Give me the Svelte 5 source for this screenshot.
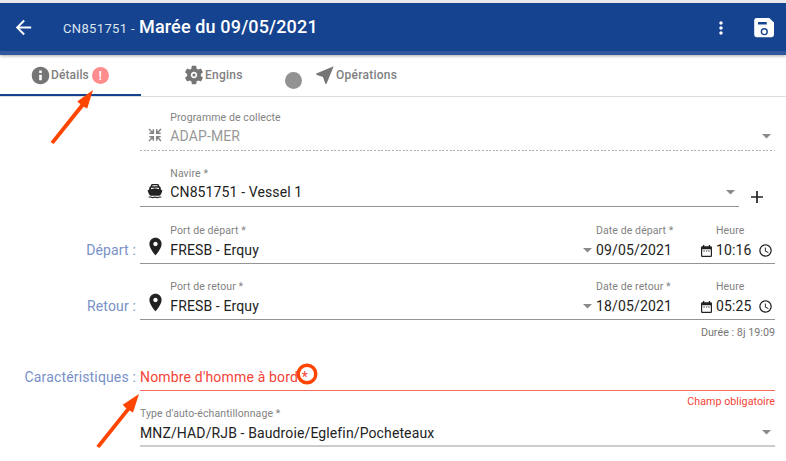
<script>
  const paths = {
    back: 'M20 11H7.83l5.59-5.59L12 4l-8 8 8 8 1.41-1.41L7.83 13H20v-2z',
    more: 'M12 8c1.1 0 2-.9 2-2s-.9-2-2-2-2 .9-2 2 .9 2 2 2zm0 2c-1.1 0-2 .9-2 2s.9 2 2 2 2-.9 2-2-.9-2-2-2zm0 6c-1.1 0-2 .9-2 2s.9 2 2 2 2-.9 2-2-.9-2-2-2z',
    info: 'M12 2C6.48 2 2 6.48 2 12s4.48 10 10 10 10-4.48 10-10S17.52 2 12 2zm1.5 15.500h-3v-6.500h3v6.500zm0-8.300h-3V6.400h3V9.200z',
    gear: 'M19.43 12.98c.04-.32.07-.64.07-.98s-.03-.66-.07-.98l2.11-1.65c.19-.15.24-.42.12-.64l-2-3.46c-.12-.22-.39-.3-.61-.22l-2.49 1c-.52-.4-1.08-.73-1.69-.98l-.38-2.65C14.46 2.18 14.25 2 14 2h-4c-.25 0-.46.18-.49.42l-.38 2.65c-.61.25-1.17.59-1.69.98l-2.49-1c-.23-.09-.49 0-.61.22l-2 3.46c-.13.22-.07.49.12.64l2.11 1.65c-.04.32-.07.65-.07.98s.03.66.07.98l-2.11 1.65c-.19.15-.24.42-.12.64l2 3.46c.12.22.39.3.61.22l2.49-1c.52.4 1.08.73 1.69.98l.38 2.65c.03.24.24.42.49.42h4c.25 0 .46-.18.49-.42l.38-2.65c.61-.25 1.17-.59 1.69-.98l2.49 1c.23.09.49 0 .61-.22l2-3.46c.12-.22.07-.49-.12-.64l-2.11-1.65zM12 15.5c-1.93 0-3.5-1.57-3.5-3.5s1.57-3.5 3.5-3.5 3.5 1.57 3.5 3.5-1.57 3.5-3.5 3.5zm0-1.8a1.7 1.7 0 1 0 0-3.4 1.7 1.7 0 0 0 0 3.4z',
    nav: 'M21.500 2.500L2.500 10.300v1.400l7.300 2.500L12.300 21.500h1.400L21.500 2.500z',
    boat: 'M8 1.500h8q1.500 0 2 1.500l.5 2q1.800.4 2 2l.5 3.200 2.200 1.100L21 17q-.8 2-3 2H6q-2.200 0-3-2L.8 11.300 3 10.200 3.500 7q.2-1.600 2-2L6 3q.5-1.500 2-1.500zM8.400 3.300L8 5h8l-.4-1.700zM6.200 7.200l-.3 2L12 7.700l6.100 1.500-.3-2zM2.500 20.200h3q3 1.300 6.500 0 3.500 1.300 6.500 0h3v1.600h-2.700Q16 23.500 12 22q-4 1.500-6.800-.2H2.500z',
    pin: 'M12 2C8.13 2 5 5.13 5 9c0 5.25 7 13 7 13s7-7.75 7-13c0-3.87-3.13-7-7-7zm0 9.5c-1.38 0-2.5-1.12-2.5-2.5s1.12-2.5 2.5-2.5 2.5 1.12 2.5 2.5-1.12 2.5-2.5 2.5z',
    clock: 'M11.99 2C6.47 2 2 6.48 2 12s4.47 10 9.99 10C17.52 22 22 17.52 22 12S17.52 2 11.99 2zM12 20c-4.42 0-8-3.58-8-8s3.58-8 8-8 8 3.58 8 8-3.58 8-8 8zm.5-13H11v6l5.25 3.15.75-1.23-4.5-2.67z'
  };

  const trips = [
    { side: 'Départ :', port: 'Port de départ *', date: 'Date de départ *', day: '09/05/2021', time: '10:16' },
    { side: 'Retour :', port: 'Port de retour *', date: 'Date de retour *', day: '18/05/2021', time: '05:25' }
  ];
</script>

{#snippet icon(name, size)}
  <svg class="icon" width={size} height={size} viewBox="0 0 24 24"><path d={paths[name]} fill="currentColor" fill-rule="evenodd" /></svg>
{/snippet}

{#snippet caret()}
  <svg class="caret" width="9" height="5" viewBox="0 0 9 5"><path d="M0 0h9L4.500 4.500z" fill="currentColor" /></svg>
{/snippet}

<div class="page">
  <header>
    <span class="back">{@render icon('back', 23)}</span>
    <h1><small>CN851751 -</small><b>Marée du 09/05/2021</b></h1>
    <span class="more">{@render icon('more', 20)}</span>
    <svg class="save" width="20" height="20" viewBox="0 0 20 20">
      <path fill="#fff" fill-rule="evenodd" d="M2.6 0h12.6L20 4.6v12.2a2.4 2.4 0 0 1-2.4 2.4H2.6A2.4 2.4 0 0 1 .2 16.800V2.400A2.400 2.400 0 0 1 2.600 0zM4 3.900v2.600h8.700V3.900z" />
      <circle cx="10.300" cy="13.700" r="2.900" fill="none" stroke="#15438f" stroke-width="1.400" />
    </svg>
  </header>

  <nav>
    <div class="tab active">{@render icon('info', 21)}<span>Détails</span><i class="alert">!</i></div>
    <div class="tab gears">{@render icon('gear', 22)}<span>Engins</span></div>
    <i class="dot"></i>
    <div class="tab ops">{@render icon('nav', 22)}<span>Opérations</span></div>
  </nav>

  <main>
    <section class="row first">
      <aside></aside>
      <div class="field disabled">
        <div class="lead">
          <svg width="14" height="14" viewBox="0 0 14 14" fill="none" stroke="currentColor" stroke-width="1.500">
            <path d="M1 1l4.200 4.200M1.300 5.300h4V1.300M13 1L8.800 5.200M12.700 5.300h-4V1.300M1 13l4.200-4.200M1.300 8.700h4v4M13 13L8.800 8.800M12.700 8.700h-4v4" />
          </svg>
        </div>
        <div class="body"><label>Programme de collecte</label><p>ADAP-MER</p></div>
        {@render caret()}
      </div>
    </section>

    <section class="row second">
      <aside></aside>
      <div class="field">
        <div class="lead boat">{@render icon('boat', 16)}</div>
        <div class="body"><label>Navire *</label><p>CN851751 - Vessel 1</p></div>
        {@render caret()}
      </div>
      <svg class="plus" width="12" height="12" viewBox="0 0 12 12"><path d="M6 0v12M0 6h12" stroke="#222" stroke-width="1.700" /></svg>
    </section>

    {#each trips as trip, i}
      <section class="row" class:third={i === 0} class:fourth={i === 1}>
        <aside>{trip.side}</aside>
        <div class="field trip">
          <div class="lead pin">{@render icon('pin', 21)}</div>
          <div class="body"><label>{trip.port}</label><p>FRESB - Erquy</p></div>
          {@render caret()}
          <div class="date"><label>{trip.date}</label><p class="num">{trip.day}</p></div>
          <svg class="calendar" width="11" height="12" viewBox="0 0 11 12">
            <path fill="#222" fill-rule="evenodd" d="M2 0h1.300v1.200h4.400V0H9v1.200h.8a1.200 1.200 0 0 1 1.200 1.200v8.400a1.200 1.200 0 0 1-1.200 1.200H1.200A1.200 1.200 0 0 1 0 10.800V2.400a1.200 1.200 0 0 1 1.200-1.200H2zM1.200 4.200v6.600h8.600V4.200z" />
            <path fill="#222" d="M2.400 5.400h1.300v1.200H2.400zM4.900 5.400h1.300v1.200H4.900zM7.300 5.400h1.300v1.200H7.300z" />
          </svg>
          <div class="time"><label>Heure</label><p class="num">{trip.time}</p></div>
          <span class="clock">{@render icon('clock', 15)}</span>
        </div>
      </section>
    {/each}
    <div class="hint">Durée : 8j 19:09</div>

    <section class="row crew">
      <aside>Caractéristiques :</aside>
      <div class="field invalid"><p>Nombre d'homme à bord *</p></div>
    </section>
    <div class="hint error">Champ obligatoire</div>

    <section class="row last">
      <aside></aside>
      <div class="field">
        <div class="body"><label>Type d'auto-échantillonnage *</label><p>MNZ/HAD/RJB - Baudroie/Eglefin/Pocheteaux</p></div>
        {@render caret()}
      </div>
    </section>
  </main>

  <svg class="notes" width="786" height="461" viewBox="0 0 786 461">
    <g fill="#ff4500" stroke="none">
      <path d="M50.500 141.900L80.500 104.200L77.200 101.400L93 90L87.200 108.600L83.700 106.700L53.700 144z" />
      <path d="M96.300 446.100L126.300 408.400L122.700 404.800L139 394L133 412.500L129.500 410.600L99.500 448z" />
    </g>
    <circle cx="307" cy="374" r="8.800" fill="none" stroke="#ff4500" stroke-width="3.400" />
  </svg>
</div>

<style>
  :global(body) { margin: 0; background: #fff; }
  .page { position: relative; width: 786px; height: 461px; overflow: hidden; background: #fff; font-family: Roboto, sans-serif; color: #222; }
  header { display: flex; align-items: center; box-sizing: border-box; height: 55px; border-top: 3px solid #e9e9ed; border-bottom: 4px solid #30589c; background: #15438f; color: #fff; box-shadow: 0 1px 3px #0005; }
  .icon { display: block; flex: none; }
  .back { padding-left: 12px; }
  h1 { flex: 1; display: flex; align-items: baseline; margin: 2px 0 0 28px; white-space: nowrap; line-height: 24px; }
  small { width: 76px; font-size: 13px; font-weight: 400; color: #dbe3f0; letter-spacing: .35px; }
  h1 b { font-size: 18px; font-weight: 500; letter-spacing: .15px; }
  .more { margin: 1px 23px 0 0; }
  .save { margin: 1px 12px 0 0; }
  nav { display: flex; box-sizing: border-box; height: 42px; border-bottom: 1px solid #ddd; color: #808080; font-size: 12px; font-weight: 500; line-height: 40px; }
  .tab { display: flex; align-items: center; height: 41px; box-sizing: border-box; padding-top: 1px; }
  .tab .icon { color: #757575; }
  .active { width: 141px; padding-left: 30px; border-bottom: 2px solid #15438f; letter-spacing: .12px; }
  .alert { display: block; width: 17px; height: 17px; margin-left: 3px; border-radius: 50%; background: #ff8d8d; color: #fff; font: 500 13px/17px Roboto, sans-serif; text-align: center; }
  .gears { width: 144px; padding-left: 42px; border-bottom: 2px solid transparent; letter-spacing: .25px; }
  .dot { width: 17px; height: 17px; margin-top: 17px; border-radius: 50%; background: #929292; }
  .ops { padding-left: 12px; border-bottom: 2px solid transparent; letter-spacing: .25px; }
  main { display: flex; flex-direction: column; padding-top: 12px; }
  .row { display: flex; flex: none; height: 42px; padding-right: 11px; }
  .second { margin-top: 14px; }
  .second .field { flex: none; width: 599px; }
  .third { margin-top: 15px; }
  .fourth { margin-top: 14px; }
  aside { box-sizing: border-box; width: 140px; padding: 17px 4px 0 0; text-align: right; font-size: 14px; line-height: 22px; color: #7891c8; white-space: nowrap; letter-spacing: .15px; }
  .field { display: flex; flex: 1; box-sizing: border-box; border-bottom: 1px solid #949494; }
  .disabled { border-bottom: 0; background: repeating-linear-gradient(90deg, #b0b0b0 0 2px, #fff 2px 3.600px) bottom / 100% 1px no-repeat; }
  .disabled p { color: #999; }
  .disabled .lead { color: #858585; }
  .lead { width: 30px; box-sizing: border-box; padding: 18px 0 0 8px; }
  .boat { padding: 18px 0 0 7px; }
  .pin { padding: 14px 0 0 5px; }
  .body { flex: 1; }
  .lead + .body { padding-left: .3px; }
  label { display: block; padding-top: 1px; font-size: 10.500px; line-height: 15px; color: #828282; white-space: nowrap; letter-spacing: .1px; }
  p { margin: 0; font-size: 14px; line-height: 22px; white-space: nowrap; letter-spacing: .12px; }
  .num { letter-spacing: .15px; }
  .caret { margin: 25px 4px 0 0; color: #8a8a8a; }
  .trip .caret { margin: 26px 4px 0 0; }
  .trip p { padding-top: 1px; }
  .last p { padding-top: 1px; }
  .date { width: 105px; }
  .calendar { margin: 23px 4px 0 0; }
  .time { width: 42px; }
  .clock { padding: 21px 2px 0 0; }
  .plus { margin: 26px 0 0 12px; }
  .hint { padding-right: 11px; margin-top: 5px; text-align: right; font-size: 10.700px; line-height: 16px; color: #757575; letter-spacing: .04px; }
  .crew { margin-top: 8px; }
  .crew aside { padding-top: 17px; }
  .invalid { border-color: #f96b60; color: #f44336; }
  .invalid p { padding-top: 17px; letter-spacing: .17px; }
  .error { margin-top: 3px; color: #f44336; height: 11px; }
  .last .field { border-bottom: 2px solid #ccc; }
  .notes { position: absolute; inset: 0; pointer-events: none; }
</style>
